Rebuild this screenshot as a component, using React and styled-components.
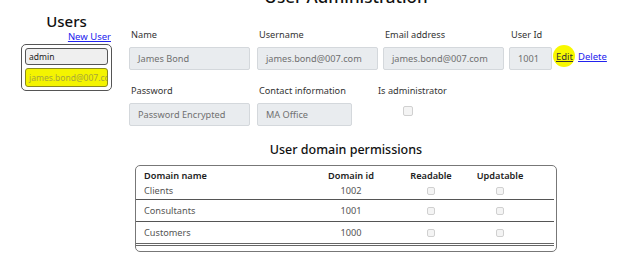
import React from "react";
import styled, { createGlobalStyle } from "styled-components";

const GlobalStyle = createGlobalStyle`
  html, body {
    margin: 0;
    padding: 0;
    background: #ffffff;
    overflow: hidden;
  }
  body {
    font-family: "Noto Sans", "Open Sans", sans-serif;
    color: #333;
  }
`;

const users = [
  { name: "admin", selected: false },
  { name: "james.bond@007.com", selected: true },
];

const domains = [
  { name: "Clients", id: 1002 },
  { name: "Consultants", id: 1001 },
  { name: "Customers", id: 1000 },
];

const App = () => {
  return (
    <>
      <GlobalStyle />
      <Page>
        <Sidebar>
          <SideTitle>Users</SideTitle>
          <NewUser href="#">New User</NewUser>
          <UserList>
            {users.map((u) => (
              <UserItem key={u.name} selected={u.selected}>
                {u.name}
              </UserItem>
            ))}
          </UserList>
        </Sidebar>
        <Main>
          <Centered>
            <Title>User Administration</Title>
          </Centered>
          <FormRow>
            <Field>
              <Label>Name</Label>
              <Input width={121}>James Bond</Input>
            </Field>
            <Field gap={7}>
              <Label>Username</Label>
              <Input width={121}>james.bond@007.com</Input>
            </Field>
            <Field gap={5}>
              <Label>Email address</Label>
              <Input width={121}>james.bond@007.com</Input>
            </Field>
            <Field gap={5}>
              <Label>User Id</Label>
              <Input width={43}>1001</Input>
            </Field>
            <Actions>
              <EditLink href="#">Edit</EditLink>
              <ActionLink href="#">Delete</ActionLink>
            </Actions>
          </FormRow>
          <FormRow second>
            <Field>
              <Label>Password</Label>
              <Input width={121}>Password Encrypted</Input>
            </Field>
            <Field gap={7}>
              <Label>Contact information</Label>
              <Input width={95}>MA Office</Input>
            </Field>
            <CheckField>
              <Label>Is administrator</Label>
              <BoxWrap>
                <Check />
              </BoxWrap>
            </CheckField>
          </FormRow>
          <Centered>
            <SubTitle>User domain permissions</SubTitle>
            <TableBox>
              <HeadRow>
                <Cell bold>Domain name</Cell>
                <Cell bold center>Domain id</Cell>
                <Cell bold center>Readable</Cell>
                <Cell bold center>Updatable</Cell>
              </HeadRow>
              {domains.map((d, i) => (
                <BodyRow key={d.id} first={i === 0} last={i === domains.length - 1}>
                  <Cell>{d.name}</Cell>
                  <Cell center>{d.id}</Cell>
                  <Cell center>
                    <Check small />
                  </Cell>
                  <Cell center>
                    <Check small />
                  </Cell>
                </BodyRow>
              ))}
            </TableBox>
          </Centered>
        </Main>
      </Page>
    </>
  );
};

export default App;

const Page = styled.div`
  display: flex;
  width: 624px;
  height: 265px;
`;

const Sidebar = styled.aside`
  width: 91px;
  margin-left: 21px;
  display: flex;
  flex-direction: column;
`;

const SideTitle = styled.h2`
  margin: 11px 0 0;
  font-size: 15px;
  line-height: 20px;
  font-weight: 500;
  color: #111;
  text-align: center;
`;

const NewUser = styled.a`
  align-self: flex-end;
  margin-right: 1px;
  font-size: 9.5px;
  line-height: 12px;
  color: #2222ee;
  text-decoration: underline;
`;

const UserList = styled.div`
  margin-top: 1px;
  border: 1px solid #555;
  border-radius: 5px;
  padding: 3px;
  display: flex;
  flex-direction: column;
  gap: 3px;
`;

const UserItem = styled.div`
  height: ${(p) => (p.selected ? 17 : 15)}px;
  line-height: ${(p) => (p.selected ? 17 : 15)}px;
  border: 1px solid ${(p) => (p.selected ? "#8a8a20" : "#555")};
  border-radius: 3px;
  background: ${(p) => (p.selected ? "#f4f400" : "#efefef")};
  color: ${(p) => (p.selected ? "#a6a63a" : "#222")};
  font-size: 8.5px;
  padding-left: 3px;
  white-space: nowrap;
  overflow: hidden;
`;

const Main = styled.main`
  margin-left: 8px;
  display: flex;
  flex-direction: column;
`;

const Centered = styled.div`
  width: 452px;
  display: flex;
  flex-direction: column;
  align-items: center;
`;

const Title = styled.h1`
  margin: -13px 0 0;
  font-size: 17px;
  line-height: 20px;
  font-weight: 500;
  color: #111;
`;

const FormRow = styled.div`
  display: flex;
  align-items: flex-start;
  margin-top: ${(p) => (p.second ? 14 : 21)}px;
  padding-left: 9px;
`;

const Field = styled.div`
  display: flex;
  flex-direction: column;
  margin-left: ${(p) => p.gap || 0}px;
`;

const Label = styled.label`
  font-size: 9.2px;
  line-height: 14px;
  color: #333;
  padding-left: 2px;
  white-space: nowrap;
`;

const Input = styled.div`
  margin-top: 5px;
  width: ${(p) => p.width}px;
  height: 23px;
  box-sizing: border-box;
  border: 1px solid #d4d8dc;
  border-radius: 2px;
  background: #e9ecef;
  color: #707070;
  font-size: 9.2px;
  line-height: 21px;
  padding-left: 8px;
  white-space: nowrap;
  overflow: hidden;
`;

const Actions = styled.div`
  display: flex;
  gap: 5px;
  margin-top: 22px;
  margin-left: 4px;
`;

const ActionLink = styled.a`
  font-size: 9.5px;
  line-height: 14px;
  color: #2222ee;
  text-decoration: underline;
`;

const EditLink = styled(ActionLink)`
  position: relative;
  color: #333;
  z-index: 0;
  &::before {
    content: "";
    position: absolute;
    left: -3px;
    top: -5px;
    width: 22px;
    height: 22px;
    border-radius: 50%;
    background: #f8f800;
    z-index: -1;
    filter: blur(0.6px);
  }
`;

const CheckField = styled.div`
  display: flex;
  flex-direction: column;
  margin-left: 24px;
`;

const BoxWrap = styled.div`
  display: flex;
  padding-left: 27px;
  margin-top: 8px;
`;

const Check = styled.span`
  display: inline-block;
  width: ${(p) => (p.small ? 8 : 10)}px;
  height: ${(p) => (p.small ? 8 : 10)}px;
  box-sizing: border-box;
  border: 1px solid #d0d0d0;
  border-radius: 2px;
  background: #f4f4f4;
`;

const SubTitle = styled.h3`
  margin: 15px 0 0;
  font-size: 12.5px;
  line-height: 17px;
  font-weight: 500;
  color: #111;
`;

const TableBox = styled.div`
  margin-top: 7px;
  width: 422px;
  box-sizing: border-box;
  border: 1px solid #777;
  border-radius: 5px;
  padding: 2px 2px 5px 0;
`;

const grid = `
  display: grid;
  grid-template-columns: 176px 62px 98px 40px;
  padding-left: 8px;
  align-items: center;
`;

const HeadRow = styled.div`
  ${grid}
  height: 14px;
`;

const BodyRow = styled.div`
  ${grid}
  height: ${(p) => (p.first ? 17 : 21)}px;
  border-bottom: ${(p) => (p.last ? "3px double #666" : "1px solid #555")};
`;

const Cell = styled.div`
  font-size: 9.2px;
  color: ${(p) => (p.bold ? "#222" : "#555")};
  font-weight: ${(p) => (p.bold ? 600 : 400)};
  text-align: ${(p) => (p.center ? "center" : "left")};
  white-space: nowrap;
  display: flex;
  justify-content: ${(p) => (p.center ? "center" : "flex-start")};
`;
